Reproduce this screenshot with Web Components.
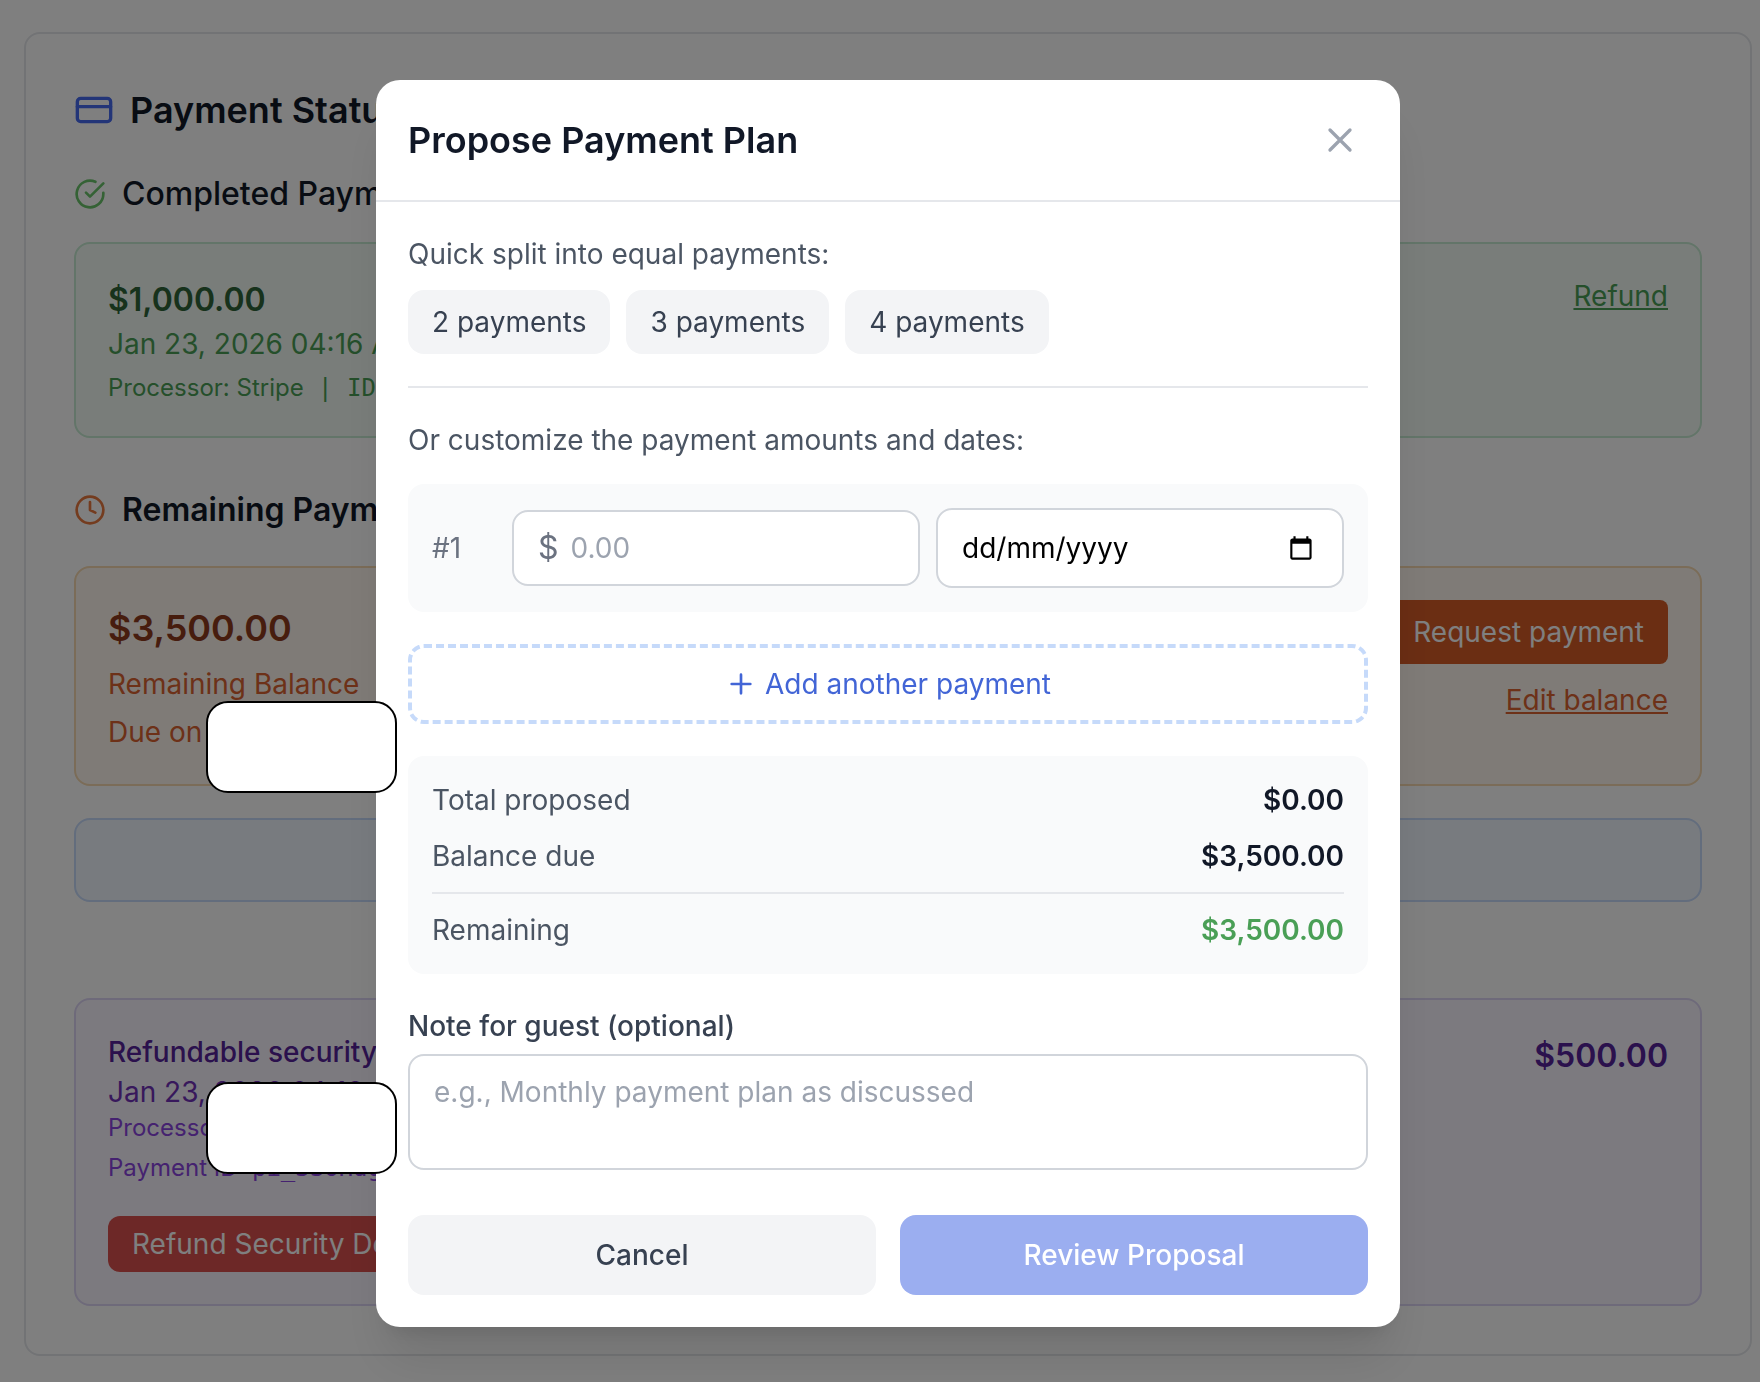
<!DOCTYPE html>
<html lang="en">
<head>
<meta charset="utf-8">
<title>Payment Status</title>
<style>
  body {
    margin: 0;
    background: #fff;
    color: #111827;
    font-family: Inter, "Liberation Sans", sans-serif;
    font-optical-sizing: none;
    font-size: 28px;
    line-height: 40px;
    overflow: hidden;
  }
  code {
    font-family: "DejaVu Sans Mono", monospace;
    white-space: pre;
  }
</style>
</head>
<body>
<payment-status>
  <section-title icon="check" color="#6ac46b" weight="500">Completed Payments</section-title>
  <info-card class="completed" style="--bg: #f3fbf4; --line: #c6ebd2">
    <amount-lines>
      <strong style="color: #2f6439">$1,000.00</strong>
      <span style="color: #4a9f56">Jan 23, 2026 04:16 AM</span>
      <small style="color: #4a9f56">Processor: Stripe<code> | ID</code></small>
    </amount-lines>
    <a slot="side" href="#refund" style="color: #4a9f56">Refund</a>
  </info-card>

  <section-title class="remaining" icon="clock" color="#e8783e" weight="600">Remaining Payments</section-title>
  <info-card class="due" style="--bg: #fef7ee; --line: #f6d9b0">
    <amount-lines spaced>
      <strong class="large" style="color: #8f3a1d">$3,500.00</strong>
      <span style="color: #da6231">Remaining Balance</span>
      <span style="color: #da6231">Due on</span>
    </amount-lines>
    <action-button slot="side" style="--bg: #d65c27; --pad: 12px; --radius: 8px">Request payment</action-button>
    <a slot="side" href="#edit-balance" style="color: #da6231">Edit balance</a>
  </info-card>

  <info-card class="plan" style="--bg: #f0f6fe; --line: #c6dafb"></info-card>

  <info-card class="deposit" style="--bg: #f9f5fe; --line: #ddd5f5">
    <amount-lines>
      <b style="color: #56229a">Refundable security deposit</b>
      <span style="color: #7031b8">Jan 23, 2026 04:16 AM</span>
      <small class="tight" style="color: #8a45e0">Processor: Stripe</small>
      <small style="color: #8a45e0">Payment ID<code> pi_3SoHdg</code></small>
    </amount-lines>
    <action-button slot="action" style="--bg: #da504e; --pad: 8px; --radius: 12px">Refund Security Deposit</action-button>
    <strong slot="side" style="color: #56229a">$500.00</strong>
  </info-card>
</payment-status>

<modal-dialog heading="Propose Payment Plan">
  <quick-split></quick-split>
  <payment-rows></payment-rows>
  <plan-summary></plan-summary>
  <guest-note></guest-note>
  <modal-actions></modal-actions>
</modal-dialog>

<blank-note style="--top: 701px"></blank-note>
<blank-note style="--top: 1082px"></blank-note>

<script>
const icons = {
  card: '<rect x="2" y="5" width="20" height="14" rx="2"/><path d="M2 10h20"/>',
  check: '<path d="M22 11.08V12a10 10 0 1 1-5.93-9.14"/><path d="M22 4 12 14.01l-3-3"/>',
  clock: '<circle cx="12" cy="12" r="10"/><path d="M12 6v6l4 2"/>',
  close: '<path d="M18 6 6 18M6 6l12 12"/>',
  plus: '<path d="M5 12h14M12 5v14"/>'
}

function icon(name, size) {
  return `<svg width="${size}" height="${size}" viewBox="0 0 24 24" fill="none" stroke="currentColor"
    stroke-width="2" stroke-linecap="round" stroke-linejoin="round" aria-hidden="true">${icons[name]}</svg>`
}

const base = `
  <style>
    * { box-sizing: border-box; }
    svg { display: block; flex: none; }
    button, input, textarea {
      margin: 0;
      font: inherit;
      font-optical-sizing: none;
      color: inherit;
    }
    button { border: 0; }
    ::placeholder { color: #9ca3af; opacity: 1; }
  </style>
`

function define(name, render) {
  window.customElements.define(name, class extends HTMLElement {
    constructor() {
      super()
      this.attachShadow({ mode: 'open' })
      this.shadowRoot.innerHTML = base + render(this)
    }
  })
}

define('payment-status', () => `
  <style>
    :host {
      display: block;
      margin: 32px 8px 0 24px;
      padding: 48px;
      border: 2px solid #e5e7eb;
      border-radius: 16px;
    }
    h2 {
      display: flex;
      align-items: center;
      gap: 16px;
      margin: 0 0 32px;
      font-size: 36px;
      line-height: 56px;
      font-weight: 600;
    }
    h2 svg { color: #466af0; }
    ::slotted(.completed) { margin-top: 24px; }
    ::slotted(.remaining) { margin-top: 48px; }
    ::slotted(.due), ::slotted(.plan) { margin-top: 32px; }
    ::slotted(.plan) { min-height: 84px; }
    ::slotted(.deposit) { margin-top: 96px; }
  </style>
  <h2>${icon('card', 40)}Payment Status</h2>
  <slot></slot>
`)

define('section-title', el => `
  <style>
    :host { display: block; }
    h3 {
      display: flex;
      align-items: center;
      gap: 16px;
      margin: 0;
      font-size: 32px;
      line-height: 48px;
      font-weight: ${el.getAttribute('weight')};
    }
    svg { color: ${el.getAttribute('color')}; }
  </style>
  <h3>${icon(el.getAttribute('icon'), 32)}<span><slot></slot></span></h3>
`)

define('info-card', () => `
  <style>
    :host {
      display: flex;
      justify-content: space-between;
      align-items: flex-start;
      box-sizing: border-box;
      padding: 32px;
      border: 2px solid var(--line);
      border-radius: 16px;
      background: var(--bg);
    }
    .side {
      display: flex;
      flex-direction: column;
      align-items: flex-end;
      gap: 16px;
    }
    ::slotted(strong) {
      font-size: 32px;
      line-height: 48px;
      font-weight: 600;
    }
    ::slotted(action-button[slot="action"]) { margin-top: 32px; }
  </style>
  <div>
    <slot></slot>
    <slot name="action"></slot>
  </div>
  <div class="side"><slot name="side"></slot></div>
`)

define('amount-lines', el => `
  <style>
    :host {
      display: flex;
      flex-direction: column;
      gap: ${el.hasAttribute('spaced') ? 8 : 0}px;
    }
    ::slotted(strong) {
      font-size: 32px;
      line-height: 48px;
      font-weight: 600;
    }
    ::slotted(strong.large) {
      font-size: 36px;
      line-height: 56px;
    }
    ::slotted(b) { font-weight: 500; }
    ::slotted(small) {
      margin-top: 8px;
      font-size: 24px;
      line-height: 32px;
    }
    ::slotted(small.tight) { margin-top: 0; }
  </style>
  <slot></slot>
`)

define('action-button', () => `
  <style>
    :host { display: block; }
    button {
      display: block;
      padding: var(--pad) 24px;
      border-radius: var(--radius);
      background: var(--bg);
      color: #fff;
    }
  </style>
  <button type="button"><slot></slot></button>
`)

define('modal-dialog', el => `
  <style>
    :host {
      position: fixed;
      inset: 0 -16px 0 0;
      display: flex;
      justify-content: center;
      align-items: flex-start;
      padding: 80px 32px 0;
      background: rgba(0, 0, 0, .5);
    }
    section {
      flex: 0 1 1024px;
      min-width: 0;
      border-radius: 24px;
      background: #fff;
      box-shadow: 0 40px 50px -10px rgba(0, 0, 0, .1), 0 16px 20px -12px rgba(0, 0, 0, .1);
    }
    header {
      display: flex;
      justify-content: space-between;
      align-items: center;
      padding: 32px;
      border-bottom: 2px solid #e5e7eb;
    }
    h2 {
      margin: 0;
      font-size: 36px;
      line-height: 56px;
      font-weight: 600;
    }
    button {
      padding: 8px;
      background: none;
      color: #9ca3af;
    }
    .body {
      display: flex;
      flex-direction: column;
      gap: 32px;
      padding: 32px;
    }
  </style>
  <section role="dialog" aria-label="${el.getAttribute('heading')}">
    <header>
      <h2>${el.getAttribute('heading')}</h2>
      <button type="button" aria-label="Close">${icon('close', 40)}</button>
    </header>
    <div class="body"><slot></slot></div>
  </section>
`)

define('quick-split', () => `
  <style>
    :host {
      display: block;
      padding-bottom: 32px;
      border-bottom: 2px solid #e5e7eb;
    }
    p { margin: 0 0 16px; color: #4b5563; }
    div { display: flex; gap: 16px; }
    button {
      padding: 12px 24px;
      border-radius: 16px;
      background: #f3f4f6;
      color: #374151;
    }
  </style>
  <p>Quick split into equal payments:</p>
  <div>
    <button type="button">2 payments</button>
    <button type="button">3 payments</button>
    <button type="button">4 payments</button>
  </div>
`)

define('payment-rows', () => `
  <style>
    :host { display: block; }
    p { margin: 0 0 24px; color: #4b5563; }
    .row {
      display: grid;
      grid-template-columns: 64px minmax(0, 1fr) minmax(0, 1fr);
      align-items: center;
      gap: 16px;
      padding: 24px;
      border-radius: 16px;
      background: #f9fafb;
    }
    .number { color: #6b7280; }
    .field {
      display: flex;
      align-items: center;
      gap: 12px;
      padding: 16px 24px;
      border: 2px solid #d1d5db;
      border-radius: 16px;
      background: #fff;
    }
    .date { padding: 18px 24px; }
    .field span {
      color: #6b7280;
      font-size: 32px;
    }
    input {
      flex: 1;
      min-width: 0;
      height: 40px;
      padding: 0;
      border: 0;
      outline: 0;
      background: none;
    }
    .date input::placeholder { color: #000; }
    .add {
      display: flex;
      justify-content: center;
      align-items: center;
      gap: 8px;
      width: 100%;
      margin-top: 32px;
      padding: 16px;
      border: 4px dashed #c6dafa;
      border-radius: 16px;
      background: none;
      color: #4265d6;
    }
  </style>
  <p>Or customize the payment amounts and dates:</p>
  <div class="row">
    <label class="number" for="amount">#1</label>
    <div class="field">
      <span>$</span>
      <input id="amount" inputmode="decimal" placeholder="0.00">
    </div>
    <div class="field date">
      <input placeholder="dd/mm/yyyy" aria-label="Payment date">
      <svg width="32" height="32" viewBox="-2 -3 30 30" aria-hidden="true">
        <path d="M20 3h-1V1h-2v2H7V1H5v2H4c-1.1 0-2 .9-2 2v16c0 1.1.9 2 2 2h16c1.1 0 2-.9 2-2V5c0-1.1-.9-2-2-2zm0 18H4V8h16v13z"/>
      </svg>
    </div>
  </div>
  <button class="add" type="button">${icon('plus', 32)}Add another payment</button>
`)

define('plan-summary', () => `
  <style>
    :host {
      display: block;
      padding: 24px;
      border-radius: 16px;
      background: #f9fafb;
    }
    dl {
      display: flex;
      flex-direction: column;
      gap: 16px;
      margin: 0;
    }
    div { display: flex; justify-content: space-between; }
    dt { color: #4b5563; }
    dd { margin: 0; font-weight: 600; }
    .remaining {
      padding-top: 16px;
      border-top: 2px solid #e5e7eb;
    }
    .remaining dd { color: #4a9f56; }
  </style>
  <dl>
    <div><dt>Total proposed</dt><dd>$0.00</dd></div>
    <div><dt>Balance due</dt><dd>$3,500.00</dd></div>
    <div class="remaining"><dt>Remaining</dt><dd>$3,500.00</dd></div>
  </dl>
`)

define('guest-note', () => `
  <style>
    :host { display: block; padding-bottom: 13px; }
    label {
      display: block;
      margin-bottom: 8px;
      color: #374151;
      font-weight: 500;
    }
    textarea {
      display: block;
      width: 100%;
      padding: 16px 24px;
      border: 2px solid #d1d5db;
      border-radius: 16px;
      resize: none;
    }
  </style>
  <label for="note">Note for guest (optional)</label>
  <textarea id="note" rows="2" placeholder="e.g., Monthly payment plan as discussed"></textarea>
`)

define('modal-actions', () => `
  <style>
    :host { display: flex; gap: 24px; }
    button {
      flex: 1;
      padding: 20px 24px;
      border-radius: 16px;
      background: #f3f4f6;
      color: #374151;
      font-weight: 500;
    }
    .primary { background: #9baef0; color: #fff; }
  </style>
  <button type="button">Cancel</button>
  <button class="primary" type="button">Review Proposal</button>
`)

define('blank-note', () => `
  <style>
    :host {
      position: absolute;
      top: var(--top);
      left: 206px;
      width: 191px;
      height: 92px;
      box-sizing: border-box;
      border: 2px solid #000;
      border-radius: 22px;
      background: #fff;
    }
  </style>
`)
</script>
</body>
</html>
